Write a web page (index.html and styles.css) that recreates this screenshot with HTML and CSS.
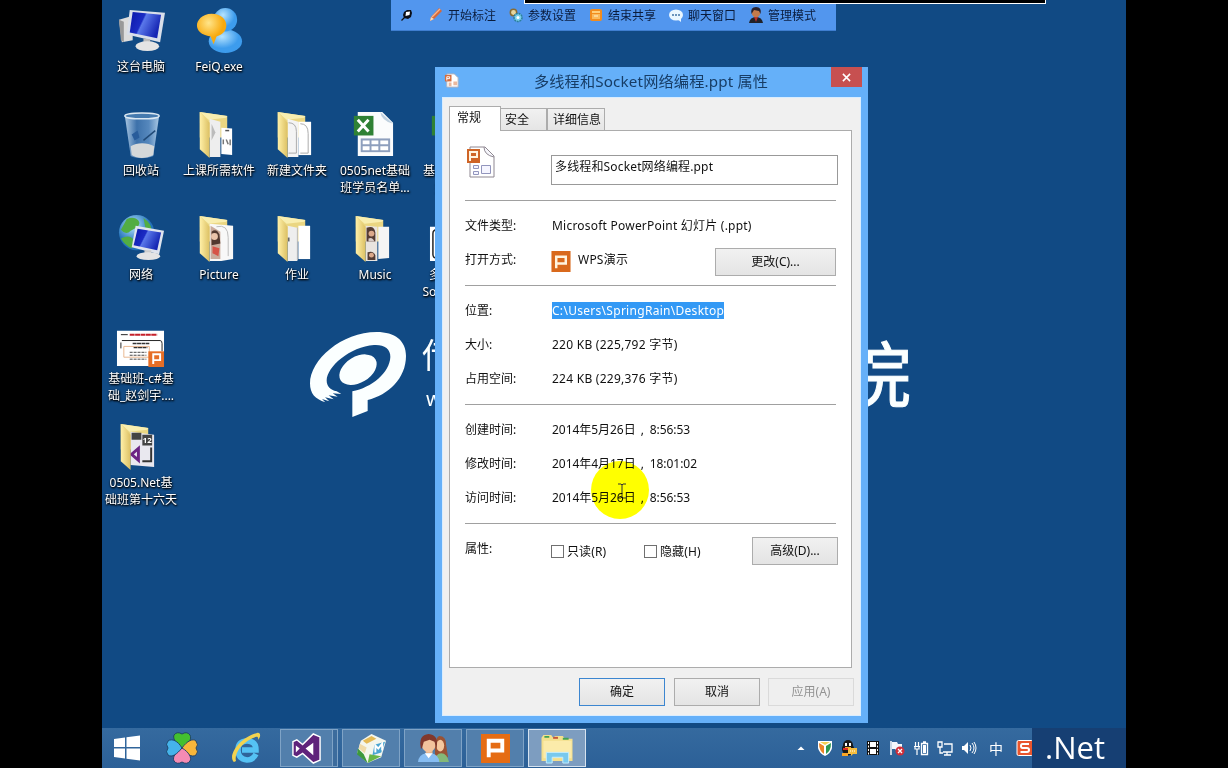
FILE: index.html
```html
<!DOCTYPE html>
<html lang="zh-CN">
<head>
<meta charset="utf-8">
<title>多线程和Socket网络编程.ppt 属性</title>
<link rel="stylesheet" href="styles.css">
</head>
<body>
<svg width="0" height="0" class="defs">
  <defs>
    <linearGradient id="fold" x1="0" x2="1"><stop offset="0" stop-color="#fff0a8"/><stop offset="1" stop-color="#dcc063"/></linearGradient>
    <linearGradient id="scr" x1="0" x2="1" y2=".4"><stop offset="0" stop-color="#0a17a8"/><stop offset=".45" stop-color="#1b2cc4"/><stop offset=".5" stop-color="#5a78ea"/><stop offset="1" stop-color="#1626b4"/></linearGradient>
    <radialGradient id="blue" cx=".4" cy=".3"><stop offset="0" stop-color="#b5e3ff"/><stop offset="1" stop-color="#3d9ced"/></radialGradient>
    <radialGradient id="gold" cx=".4" cy=".3"><stop offset="0" stop-color="#ffe58a"/><stop offset="1" stop-color="#f8a90d"/></radialGradient>
    <radialGradient id="globe" cx=".4" cy=".3"><stop offset="0" stop-color="#b7e6ff"/><stop offset="1" stop-color="#2271b9"/></radialGradient>
    <linearGradient id="bin" x1="0" x2="1"><stop offset="0" stop-color="#a8c6e2"/><stop offset=".35" stop-color="#3d71aa"/><stop offset=".7" stop-color="#5688bd"/><stop offset="1" stop-color="#a9c8e4"/></linearGradient>
    <g id="folder-back"><path d="M11 2 39 6V28H11z" fill="#ead682"/><path d="M11 2 39 6 38 8 20 10z" fill="#f8eeb0"/></g>
    <path id="folder-front" d="M11 2 21 13V49L11 40z" fill="url(#fold)"/>
  </defs>
</svg>
<div class="stage">
  <div class="wallpaper">
    <svg class="logo" viewBox="0 0 420 330">
      <path fill="#fbffff" fill-rule="evenodd" d="M30 190C30 120 125 36 230 36C285 36 318 62 318 108C318 175 265 225 203 240V273L157 291V214C215 203 269 158 271 111C272 86 251 73 222 75C150 80 81 140 80 181C80 199 90 210 110 214L124 222 98 220 113 230 86 226 101 238 75 232 88 244 66 237 76 247C45 237 30 221 30 190z"/>
      <ellipse cx="174" cy="149" rx="61" ry="39" fill="#fbffff" transform="rotate(-31 174 149)"/>
    </svg>
    <span class="brand">传</span><span class="site">ww</span><span class="academy">院</span>
  </div>

  <div class="icons">
    <div class="cell"><svg class="pc" viewBox="0 0 50 50">
      <path d="M3 14 17 10V35L6 37z" fill="#ddd"/><path d="M3 14 8 16V37L5 35z" fill="#999"/>
      <path d="M14 4 50 7 45 37 11 29z" fill="#d9dfea"/><path d="M17 6 46 9 42 33 14 27z" fill="url(#scr)"/>
      <path d="M28 33 35 34V39H28z" fill="#bbb"/><ellipse cx="32" cy="41" rx="12" ry="5" fill="#e4e4e4"/></svg><span>这台电脑</span></div>
    <div class="cell"><svg class="pc" viewBox="0 0 50 50">
      <ellipse cx="32" cy="36" rx="17" ry="12" fill="url(#blue)"/><circle cx="32" cy="14" r="12" fill="url(#blue)"/>
      <path d="M18 8C28 8 33 14 33 20S28 30 23 31L20 39 17 31C7 30 3 25 3 20S8 8 18 8z" fill="url(#gold)"/></svg><span>FeiQ.exe</span></div>
    <i></i><i></i><i></i>

    <div class="cell"><svg viewBox="0 0 50 50">
      <path d="M8 6 43 6 37 47C30 50 20 50 14 47z" fill="url(#bin)"/><ellipse cx="25.500" cy="6" rx="17.500" ry="3" fill="#457aaf" stroke="#dce8f2" stroke-width="1.500"/>
      <path d="M14 37C20 33 31 33 38 37L37 46C30 50 20 50 15 46z" fill="#d5d8d9"/><path d="M27 31 39 21" stroke="#214a77" stroke-width="1.500"/><path d="M15 25l6-4 2 7-5 3z" fill="#285c9b"/></svg><span>回收站</span></div>
    <div class="cell"><svg class="fold" viewBox="0 0 50 50"><use href="#folder-back"/>
      <path d="M21 9 32 12V48H21z" fill="#eee"/><path d="M23 14l4 9-4 8z" fill="#bbb"/><path d="M33 18 44 19V46L33 45z" fill="#fff"/><path d="M37 21h4" stroke="#555" stroke-width="1.500"/><path d="M35 30v5M38 30l2 5M42 30v6" stroke="#777" stroke-width="1.500"/><use href="#folder-front"/></svg><span>上课所需软件</span></div>
    <div class="cell"><svg class="fold" viewBox="0 0 50 50"><use href="#folder-back"/>
      <path d="M21 9 32 12V48H21z" fill="#f4f4f4"/><path d="M32 12 45 12V46L32 46z" fill="#fff"/><path d="M22 13Q30 13 30 22V44H22M34 14Q42 14 42 24V44H34" fill="none" stroke="#aaa"/><use href="#folder-front"/></svg><span>新建文件夹</span></div>
    <div class="cell"><svg class="xls" viewBox="0 0 50 50">
      <path d="M11 2H36L47 13V47H11z" fill="#fbfcfd"/><path d="M34 2Q35 11 47 14Z" fill="#bfd0df"/><path d="M7 6H27V26H7z" fill="#2f8135"/><path d="M11 10 22 22M22 10 11 22" stroke="#fff" stroke-width="3"/>
      <path d="M14 29H44V43H14z" fill="#8e9fbd"/><path d="M16 31h7v4h-7zM25 31h7v4h-7zM34 31h8v4h-8zM16 37h7v4h-7zM25 37h7v4h-7zM34 37h8v4h-8z" fill="#fff"/></svg><span>0505net基础<br>班学员名单...</span></div>
    <div class="cell"><svg class="xls" viewBox="0 0 50 50"><path d="M7 6H27V26H7z" fill="#2f8135"/></svg><span>基础班学员<br>签到表</span></div>

    <div class="cell"><svg class="net-pc" viewBox="0 0 50 50">
      <circle cx="20" cy="19" r="18" fill="url(#globe)"/><path d="M10 5Q18 2 22 7T14 17Q9 22 4 16ZM27 4Q36 10 35 17L29 14ZM4 25Q14 20 18 28L15 35Q8 32 4 25Z" fill="#52ad43"/>
      <path d="M19 12 48 17 43 41 15 34z" fill="#dfe4ee"/><path d="M21 15 45 19 41 37 17 32z" fill="url(#scr)"/><path d="M28 37h7v5h-7z" fill="#ccc"/><ellipse cx="32" cy="43" rx="12" ry="4" fill="#e4e4e4"/></svg><span>网络</span></div>
    <div class="cell"><svg class="fold" viewBox="0 0 50 50"><use href="#folder-back"/>
      <path d="M21 10 45 12V46L33 48H21z" fill="#f8f8f8"/><path d="M28 13Q40 10 40 24V43" fill="none" stroke="#bbb"/><path d="M22 12 32 18V46H22z" fill="#c9ab9c"/><path d="M23 18q5-4 8 3l1 9-9 2z" fill="#51382f"/><circle cx="26" cy="23" r="3.500" fill="#e9c3aa"/><path d="M24 33l7 2-1 8-6-3z" fill="#d65347"/><use href="#folder-front"/></svg><span>Picture</span></div>
    <div class="cell"><svg class="fold" viewBox="0 0 50 50"><use href="#folder-back"/>
      <path d="M21 12 31 14V48H21z" fill="#eee"/><path d="M32 12 44 12V46L32 46z" fill="#fff"/><path d="M22 24v4" stroke="#666" stroke-width="2"/><path d="M31 14V47" stroke="#bbb"/><use href="#folder-front"/></svg><span>作业</span></div>
    <div class="cell"><svg class="fold" viewBox="0 0 50 50"><use href="#folder-back"/>
      <path d="M21 12 33 13V48H21z" fill="#e9e4df"/><path d="M34 13 45 13V45L34 46z" fill="#f5f5f5"/><path d="M22 14q8-3 9 5v9h-9zM23 39q6-2 8 3v5h-8z" fill="#543c34"/><circle cx="27" cy="20" r="3" fill="#dca98b"/><path d="M24 25q4-2 6 3h-6z" fill="#d8ccc8"/><circle cx="27" cy="42" r="2.500" fill="#dca98b"/><use href="#folder-front"/></svg><span>Music</span></div>
    <div class="cell"><svg viewBox="0 0 50 50"><path d="M1 13H48V48H1z" fill="#fff"/><path d="M8 16Q4 16 4 20V41Q4 45 8 45" fill="none" stroke="#222" stroke-width="1.500"/></svg><span>多线程和<br>Socket网络</span></div>

    <div class="cell"><svg class="slide" viewBox="0 0 50 50">
      <path d="M1 13H49V49H1z" fill="#fff"/><path d="M5 17h7M6 23H45Q47 23 47 26V34M5 25V31" fill="none" stroke="#222"/><path d="M14 17H42" stroke="#c5202a" stroke-width="2" stroke-dasharray="5 .5"/><path d="M17 26H34M18 30H32" stroke="#333" stroke-width="1.500" stroke-dasharray="4 .5"/><path d="M14 35H31M14 38H31M14 42H31" stroke="#444" stroke-dasharray="3 1"/><path d="M8 29H34V40H8z" fill="none" stroke="#e8b790"/><path d="M33 34H49V50H33z" fill="#e66e26"/><path d="M38 47V37H45V43H38" fill="none" stroke="#fff" stroke-width="2"/></svg><span>基础班-c#基<br>础_赵剑宇....</span></div>
    <i></i><i></i><i></i><i></i>
    <div class="cell"><svg class="shift" viewBox="0 0 50 50"><use href="#folder-back"/>
      <path d="M21 10 45 13V46L21 44z" fill="#e9e8ef"/><path d="M22 11h10v7H22zM33 13h10v11H33z" fill="#444"/><path d="M42 26v14h-9" fill="none" stroke="#333" stroke-width="2"/><path d="M22 33 29 27V39z" fill="none" stroke="#6b2384" stroke-width="3"/><text x="33.500" y="21.500" class="n12">12</text><use href="#folder-front"/></svg><span>0505.Net基<br>础班第十六天</span></div>
  </div>

  <div class="sharebar">
    <svg class="pin" viewBox="0 0 12 12"><path d="M3 3 6 1h4l1 3-1 4-3 2-4-1-1-3z" fill="#0b0f18"/><path d="M5 3l4-.5-.5 3.500L4.500 7z" fill="#fff"/><path d="M.5 11.500 3.500 8.500" stroke="#111" stroke-width="1.200" fill="none"/></svg>
    <div class="tool"><svg viewBox="0 0 16 16"><path d="M2 14 3 10 11 1 14 4 6 12z" fill="#d4683b"/><path d="M4 10 12 2" stroke="#f6b48e" stroke-width="1.500"/><path d="M2 14 3 10 6 12z" fill="#f4ddc1"/></svg>开始标注</div>
    <div class="tool"><svg viewBox="0 0 16 16"><circle cx="5.500" cy="5.500" r="3.200" fill="#e6d6a0" stroke="#896c34" stroke-width="1.500"/><circle cx="10" cy="10.500" r="4" fill="#79d0ec" stroke="#2c7f9d" stroke-width="1.500" stroke-dasharray="2 .7"/><circle cx="10" cy="10.500" r="1.500" fill="#fff"/></svg>参数设置</div>
    <div class="tool"><svg viewBox="0 0 16 16"><rect x="2" y="2" width="12" height="12" rx="2" fill="#f28c1e"/><path d="M4 4h8v2H4z" fill="#ffce78"/><path d="M4 7h8v5H4z" fill="#fab95a"/><path d="M6 9h4" stroke="#fff0ce"/></svg>结束共享</div>
    <div class="tool"><svg viewBox="0 0 16 16"><ellipse cx="8" cy="8" rx="7" ry="5.500" fill="#e9f6ff"/><path d="M9 12l4 3v-5z" fill="#e9f6ff"/><path d="M4 8h8" stroke="#6b94bc" stroke-width="2" stroke-dasharray="2 1"/></svg>聊天窗口</div>
    <div class="tool"><svg viewBox="0 0 16 16"><path d="M1 16Q2 10 8 10T15 16z" fill="#20222a"/><path d="M6 10h4l-2 5z" fill="#b92c27"/><circle cx="8" cy="6" r="4.200" fill="#c37a4c"/><path d="M3.500 7Q2 0 8 0T12.500 7L11 4 6 3z" fill="#29202a"/></svg>管理模式</div>
  </div>
  <div class="topline"></div>

  <section class="dialog">
    <header class="titlebar">
      <svg viewBox="0 0 16 16"><path d="M3 1h8l4 4v10H3z" fill="#fff" stroke="#b8b4bc"/><path d="M1 2h7v7H1z" fill="#d46d3f"/><path d="M3 8V4h3v2H3" stroke="#fff" fill="none"/><path d="M5 10h3v4H5zM10 9h4v4h-4z" fill="#eab89e"/></svg>
      <h1>多线程和Socket网络编程.ppt 属性</h1>
      <button class="close"><svg viewBox="0 0 10 10"><path d="M1 1 9 9M9 1 1 9" stroke="#fff" stroke-width="1.700"/></svg></button>
    </header>
    <div class="client">
      <nav class="tabs"><div class="tab on">常规</div><div class="tab sec">安全</div><div class="tab det">详细信息</div></nav>
      <div class="panel">
        <div class="head">
          <svg viewBox="0 0 30 32"><path d="M4 1H19L28 10V31H4z" fill="#fff" stroke="#8e8791"/><path d="M18 1Q18 9 28 11" fill="#f4f4fa" stroke="#8e8791"/><path d="M1 3H14V17H1z" fill="#cf6426"/><path d="M4 15V6H11V11H4" fill="none" stroke="#fff3df" stroke-width="2"/><path d="M7.500 19.500h5v3h-5zM7.500 25.500h5v3h-5zM15.500 19.500h9v8h-9z" fill="#f5f5ff" stroke="#9295bd"/></svg>
          <div class="field">多线程和Socket网络编程.ppt</div>
        </div>
        <div class="group">
          <div class="row"><b>文件类型:</b><span class="w1">Microsoft PowerPoint 幻灯片 (.ppt)</span></div>
          <div class="row"><b>打开方式:</b><svg class="wps" viewBox="0 0 20 22"><path d="M0 0h20v22H0z" fill="#d9691c"/><path d="M5 18V6H15V13H5" fill="none" stroke="#fff4df" stroke-width="2.600"/></svg><span class="w1">WPS演示</span><button class="btn change">更改(C)...</button></div>
        </div>
        <div class="group">
          <div class="row"><b>位置:</b><span class="sel">C:\Users\SpringRain\Desktop</span></div>
          <div class="row"><b>大小:</b><span class="w2">220 KB (225,792 字节)</span></div>
          <div class="row"><b>占用空间:</b><span class="w2">224 KB (229,376 字节)</span></div>
        </div>
        <div class="group">
          <div class="row"><b>创建时间:</b><span class="date">2014年5月26日<em>,</em>8:56:53</span></div>
          <div class="row"><b>修改时间:</b><span class="date">2014年4月17日<em>,</em>18:01:02</span></div>
          <div class="row"><b>访问时间:</b><span class="date">2014年5月26日<em>,</em>8:56:53</span></div>
        </div>
        <div class="group attrs">
          <b>属性:</b><label class="ro"><i></i>只读(R)</label><label class="hid"><i></i>隐藏(H)</label><button class="btn adv">高级(D)...</button>
        </div>
      </div>
      <footer><button class="btn ok">确定</button><button class="btn">取消</button><button class="btn off">应用(A)</button></footer>
    </div>
  </section>

  <div class="spot"><svg viewBox="0 0 10 16"><path d="M1 1h3l1 1 1-1h3M5 2V14M1 15h3l1-1 1 1h3" fill="none" stroke="#333" stroke-width="1"/></svg></div>

  <div class="taskbar">
    <div class="launch start"><svg viewBox="0 0 28 26"><path d="M1 4 12 2.500V12H1zM13.500 2.300 27 .5V12H13.500zM1 13.500H12V23.500L1 22zM13.500 13.500H27V25.500L13.500 23.700z" fill="#fff"/></svg></div>
    <div class="launch clover"><svg viewBox="0 0 32 32"><g stroke="#1d3d62" stroke-width=".9"><path d="M16 16C8 11 7 5 8 3Q11 -1 16 2 21 -1 24 3C26 7 23 12 16 16z" fill="#43c02f"/><path d="M16 16C21 9 27 6 30 9Q33 13 30 16 33 20 30 23C26 26 20 22 16 16z" fill="#f8b63a"/><path d="M16 16C23 20 26 26 24 29Q21 33 16 30 11 33 8 29C6 25 10 20 16 16z" fill="#f58bb4"/><path d="M16 16C11 22 6 26 2 23Q-1 20 2 16 -1 12 2 9C6 6 12 9 16 16z" fill="#45b3ea"/></g></svg></div>
    <div class="launch ie"><svg viewBox="0 0 32 32"><path d="M26 22Q23 28 17 28 8 27 8 18T17 9 26 18H12" fill="none" stroke="#55c2f4" stroke-width="5.500"/><path d="M4 30C-3 24 10 5 27 1 31 0 31 5 28 8 29 4 26 4 21 7 11 12 4 22 6 29z" fill="#f3d350"/></svg></div>
    <div class="task vs"><svg viewBox="0 0 32 32"><path d="M2 9 6 7 12 12 23 1 30 4V28L23 31 12 21 6 25 2 23z" fill="#5f237b" stroke="#fff" stroke-width="1.500"/><path d="M5 13v7l4-4zM23 10v13l-8-7z" fill="#fff"/></svg></div>
    <div class="task"><svg viewBox="0 0 32 32"><path d="M5 8 16 1 31 8 26 25 12 31 1 21z" fill="#f4f6ed"/><path d="M7 8 16 3 21 6 11 11z" fill="#e5ba55"/><path d="M2 16 8 22 12 31 1 22z" fill="#3d993c"/><path d="M12 31 14 22 26 24z" fill="#67b646"/><path d="M4 11 11 15 9 21 3 16z" fill="#f0dba9"/><path d="M19 12 30 9 26 20 17 23z" fill="#4aa5d2"/><path d="M20 20V13l3 3 4-5v7" fill="none" stroke="#fff" stroke-width="2"/></svg></div>
    <div class="task"><svg viewBox="0 0 32 32"><path d="M18 27Q16 5 22 3 29 3 29 12L31 25z" fill="#995234"/><ellipse cx="23" cy="13" rx="4" ry="6" fill="#f5c89f"/><path d="M17 30Q18 21 24 21T32 30z" fill="#84b878"/><path d="M8 17h7v6H8z" fill="#e8b388"/><ellipse cx="11" cy="12" rx="7" ry="8" fill="#f2c39d"/><path d="M3 16Q0 2 11 1 22 2 19 16L17 9 12 7 6 9 4 16z" fill="#81382c"/><path d="M0 30Q1 22 8 21H14Q21 22 22 30z" fill="#87bdf2"/><path d="M7 21l4 5 4-5z" fill="#fff"/></svg></div>
    <div class="task"><svg viewBox="0 0 32 32"><path d="M1 1H31V31H1z" fill="#e56c14"/><path d="M9 25V8H23V18H9" fill="none" stroke="#fff" stroke-width="4"/></svg></div>
    <div class="task active"><svg viewBox="0 0 34 32"><path d="M1 5 3 2h8l2 3 2-2h8l2 3h8V29H1z" fill="#f4df8c"/><path d="M4 4h5M23 6h6" stroke="#42a252" stroke-width="2"/><path d="M13 5h5" stroke="#c4573a" stroke-width="2"/><path d="M3 8H32V26H3z" fill="#fbebaa"/><path d="M6 31V20H29V31H23V25H12V31z" fill="#79c9ed" stroke="#c2ecff"/></svg></div>
    <div class="tray">
      <svg viewBox="0 0 16 16"><path d="M4.500 10 8 6.500 11.500 10z" fill="#fff"/></svg>
      <svg viewBox="0 0 16 16"><path d="M1 1H15V8Q14 13 8 16 2 13 1 8z" fill="#fff"/><path d="M2 3 7 6V14Q2 11 2 3z" fill="#ec8427"/><path d="M14 3 9 6V14Q14 11 14 3z" fill="#2c9851"/><path d="M3 2H13L8 5z" fill="#f4d154"/></svg>
      <svg viewBox="0 0 16 16"><ellipse cx="7" cy="9" rx="6" ry="6.500" fill="#191919"/><circle cx="7" cy="5" r="5" fill="#191919"/><path d="M4 3h2v3H4zM8 3h2v3H8z" fill="#fff"/><path d="M4 7h6v1H4zM1 13h6v3H1z" fill="#f7a526"/><path d="M2 9h10" stroke="#d92c27" stroke-width="2"/><path d="M7 8h9v6h-4l-2 2v-2H7z" fill="#f5bd3e"/><path d="M9 11h5" stroke="#fff" stroke-dasharray="1 1"/></svg>
      <svg viewBox="0 0 16 16"><path d="M2 1H14V15H2z" fill="#111"/><path d="M5 2h6v5H5zM5 9h6v5H5z" fill="#fff"/><path d="M3.500 2V15M12.500 2V15" stroke="#fff" stroke-dasharray="2 1.500"/></svg>
      <svg viewBox="0 0 16 16"><path d="M2 1V15" stroke="#fff" stroke-width="1.500"/><path d="M3 2h5l1 2h4v6H7L6 9H3z" fill="#f4f8fc"/><circle cx="11" cy="11" r="4.500" fill="#d12e39"/><path d="M9 9l4 4M13 9l-4 4" stroke="#fff" stroke-width="1.300"/></svg>
      <svg viewBox="0 0 16 16"><path d="M2.500 2v4M5.500 2v4M1 6.500h6M2 7v2h4V7M4 9v6" stroke="#fff" fill="none" stroke-width="1.200"/><path d="M8.500 3.500h6v11h-6zM10 2h3" stroke="#fff" fill="none" stroke-width="1.300"/><path d="M10 5h3v8h-3z" fill="#fff"/></svg>
      <svg viewBox="0 0 16 16"><path d="M7 4H15V12H6M10 12v3M7 15h7M1 2h4v5H1zM3 7v6h3" stroke="#fff" fill="none" stroke-width="1.300"/></svg>
      <svg viewBox="0 0 16 16"><path d="M1 6h2l4-4v12L3 10H1z" fill="#fff"/><path d="M9 5q2 3 0 6M11 3q4 5 0 10M13 2q4 6 0 12" stroke="#fff" fill="none"/></svg>
      <span>中</span>
      <svg class="sogou" viewBox="0 0 16 16"><rect x="1" y=".5" width="16" height="15" rx="1.500" fill="#e9552d" stroke="#fff"/><path d="M13 4H6.500Q5 4 5 6T6.500 8H11Q13 8 13 10T11 12H4.500" fill="none" stroke="#fff" stroke-width="2"/></svg>
    </div>
    <div class="net">.Net</div>
  </div>
</div>
</body>
</html>
```
FILE: styles.css
```css
* { box-sizing: border-box; }
body { margin: 0; background: #000; width: 1228px; height: 768px; overflow: hidden; font: 12px/17px "Noto Sans", "Noto Sans CJK SC", sans-serif; color: #111; }
svg { display: block; flex: none; }
button { font: inherit; color: inherit; padding: 0; }
b, em, i { font-weight: normal; font-style: normal; }
.defs { position: absolute; }
.stage { position: relative; width: 1024px; height: 768px; margin: 0 auto; background: #114a84; overflow: hidden; white-space: nowrap; }

/* wallpaper artwork */
.logo { position: absolute; left: 198px; top: 320px; width: 140px; height: 110px; }
.brand, .site, .academy { position: absolute; color: #fbffff; }
.brand { left: 320px; top: 333px; font-size: 34px; line-height: 44px; }
.site { left: 324px; top: 385px; font-size: 20px; line-height: 28px; }
.academy { left: 738px; top: 334px; font-size: 71px; line-height: 80px; -webkit-text-stroke: 1px #fbffff; }

/* desktop icons */
.icons { display: grid; grid-template-columns: repeat(5, 78px); grid-auto-rows: 104px; padding-top: 6px; }
.cell { display: flex; flex-direction: column; align-items: center; gap: 3px; color: #fff; text-align: center; text-shadow: 1px 1px 2px #000, 0 1px 2px #000; }
.cell svg { width: 49px; height: 49px; }
.cell svg.pc { margin-right: 2px; }
.cell svg.slide { margin-right: 1px; }
.cell svg.fold { margin-right: 12px; }
.cell svg.shift { margin-right: 14px; }
.cell svg.xls { margin-right: 8px; }
.n12 { font: bold 8px "Noto Sans", sans-serif; fill: #fff; text-shadow: none; }

/* screen sharing toolbar */
.sharebar { position: absolute; left: 289px; top: 0; width: 445px; height: 31px; background: #5296ee; display: flex; align-items: center; color: #0a1c3c; border-bottom: 1px solid #3f7ed0; }
.pin { width: 12px; height: 12px; margin: 0 15px 0 10px; }
.tool { display: flex; align-items: center; gap: 4px; width: 80px; }
.tool svg { width: 16px; height: 16px; }
.topline { position: absolute; left: 422px; top: 0; width: 522px; height: 4px; background: #000; border: solid #fff; border-width: 0 1px 1px; }

/* properties dialog */
.dialog { position: absolute; left: 333px; top: 67px; width: 433px; height: 656px; background: #65b0f9; padding: 0 7px 7px; }
.titlebar { height: 30px; display: flex; align-items: flex-start; }
.titlebar > svg { width: 15px; height: 15px; margin: 6px 0 0 2px; }
.titlebar h1 { flex: 1; margin: 0 0 0 12px; font-size: 15.2px; letter-spacing: .15px; line-height: 28px; font-weight: normal; text-align: center; color: #173d66; }
.close { width: 31px; height: 20px; margin-right: -1px; background: #c75050; border: 0; display: grid; place-items: center; }
.close svg { width: 9px; height: 9px; }
.client { height: 619px; background: #f0f0f0; border: 1px solid #d9edff; padding: 8px 6px 0; }
.tabs { height: 24px; display: flex; align-items: flex-end; }
.tab { height: 22px; border: 1px solid #acacac; border-bottom: 0; padding-left: 5px; line-height: 22px; background: linear-gradient(#f1f1f1, #e5e5e5); }
.tab.on { position: relative; width: 52px; height: 25px; margin-bottom: -1px; padding-left: 7px; background: #fff; }
.tab.sec { width: 46px; border-left: 0; padding-left: 4px; }
.tab.det { width: 58px; }
.panel { width: 403px; height: 538px; background: #fff; border: 1px solid #acacac; padding: 0 13px 0 15px; }
.head { height: 69px; display: flex; align-items: flex-start; }
.head svg { width: 30px; height: 32px; margin: 15px 56px 0 1px; }
.field { width: 287px; height: 30px; margin-top: 24px; margin-left: -1px; border: 1px solid #999; padding: 2px 3px; letter-spacing: .15px; }
.group { position: relative; padding: 8px 0; border-top: 1px solid #a0a0a0; width: 371px; }
.row { height: 34px; display: flex; align-items: center; }
.row b, .row span { position: relative; top: -1px; }
.row b, .attrs b { width: 87px; flex: none; }
.row em { display: inline-block; width: 14px; padding-left: 5px; }
.w1 { letter-spacing: .22px; }
.w2 { letter-spacing: .25px; }
.date { letter-spacing: -.04px; }
.sel { background: #3399f5; color: #fff; letter-spacing: .29px; }
.wps { width: 20px; height: 21px; margin: 3px 7px 0 -1px; }
.btn { width: 86px; height: 28px; flex: none; border: 1px solid #acacac; background: linear-gradient(#f1f1f1, #e4e4e4); padding-bottom: 1px; }
.change { width: 121px; margin: 4px 0 0 auto; }
.attrs { height: 60px; display: flex; align-items: flex-start; }
.attrs b { padding-top: 8px; }
label { display: flex; align-items: center; gap: 3px; margin-top: 11px; letter-spacing: .1px; }
label i { width: 13px; height: 13px; border: 1px solid #707070; background: #fff; }
.ro { width: 93px; flex: none; margin-left: -1px; }
.hid { width: 108px; flex: none; }
.adv { margin-top: 5px; }
footer { display: flex; gap: 9px; padding: 10px 0 0 130px; }
.ok { border-color: #3c86d0; }
.off { color: #929292; border-color: #dadada; background: #efefef; margin-left: -1px; }

/* click highlight with the text cursor */
.spot { position: absolute; left: 489px; top: 461px; width: 58px; height: 58px; border-radius: 50%; background: #ff0; mix-blend-mode: multiply; }
.spot svg { position: absolute; left: 26px; top: 21px; width: 10px; height: 18px; }

/* taskbar */
.taskbar { position: absolute; left: 0; right: 0; bottom: 0; height: 40px; background: linear-gradient(#356a9f, #2c6097); display: flex; align-items: center; }
.launch { width: 64px; display: grid; place-items: center; }
.launch.start { width: 50px; }
.start svg { width: 28px; height: 26px; }
.launch.clover { width: 60px; }
.clover svg, .ie svg { width: 32px; height: 32px; }
.launch.ie { width: 68px; }
.task { width: 58px; height: 38px; margin-right: 4px; border: 1px solid #7fa3c6; background: #527fac; display: grid; place-items: center; }
.task svg { width: 31px; height: 31px; }
.task.vs { box-shadow: inset -4px 0 #3c6c9d, inset -5px 0 #7fa3c6; padding-right: 5px; }
.task.active { background: #7d9dc0; border-color: #d5e2ef; }
.task.active svg { width: 34px; }
.tray { margin-left: auto; display: flex; align-items: center; gap: 8px; }
.tray svg { width: 16px; height: 16px; }
.tray span { color: #fff; font-size: 14px; width: 20px; text-align: center; margin: 0 2px 0 1px; }
.tray .sogou { margin-right: 0; }
.net { width: 94px; height: 40px; background: #163f73; color: #fff; font: 31px/38px "Open Sans", "Noto Sans", sans-serif; padding-left: 13px; }
```
